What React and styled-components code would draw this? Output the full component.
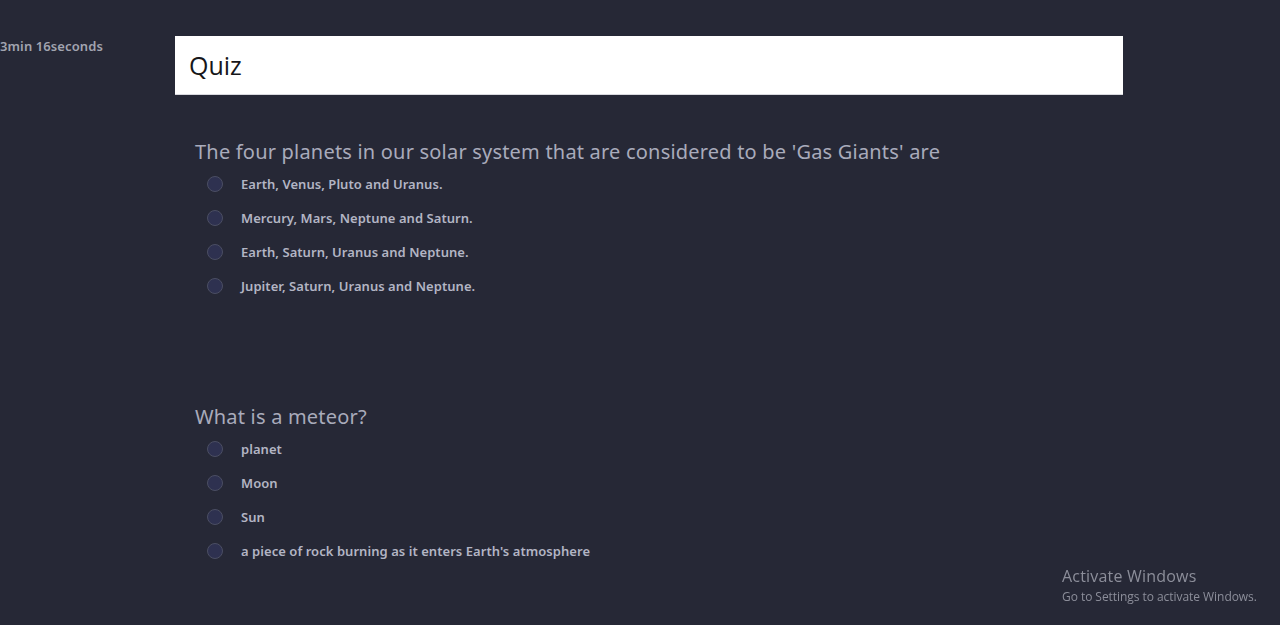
import React from 'react'
import styled, { createGlobalStyle } from 'styled-components'

const Global = createGlobalStyle`
  html, body {
    margin: 0;
    padding: 0;
    background: #262836;
  }
  body {
    font-family: "Noto Sans", Lato, sans-serif;
  }
`

const Page = styled.div`
  display: flex;
  background: #262836;
`

const Timer = styled.div`
  width: 175px;
  flex-shrink: 0;
  padding-top: 37px;
  font-size: 13px;
  font-weight: 600;
  color: #a2a4b0;
  letter-spacing: 0.1px;
`

const Main = styled.div`
  width: 948px;
  padding-top: 36px;
`

const Header = styled.div`
  height: 58px;
  background: #ffffff;
  border-bottom: 1px solid #d8d9de;
  display: flex;
  align-items: center;
  padding-left: 14px;
  font-family: "Open Sans", sans-serif;
  font-size: 25px;
  color: #16161a;
`

const List = styled.div`
  padding: 42px 0 0 20px;
`

const Block = styled.div`
  & + & {
    margin-top: 99px;
  }
`

const Title = styled.div`
  height: 30px;
  line-height: 30px;
  font-size: 20px;
  color: #a9abbb;
  letter-spacing: 0.2px;
`

const Option = styled.label`
  display: flex;
  align-items: center;
  height: 34px;
  padding-left: 12px;
  gap: 18px;
  font-size: 13px;
  font-weight: 600;
  color: #b3b5c4;
  letter-spacing: 0.05px;
  cursor: pointer;
`

const Radio = styled.span`
  width: 14px;
  height: 14px;
  border-radius: 50%;
  background: #2e3150;
  border: 1px solid #4b4e63;
  flex-shrink: 0;
`

const Watermark = styled.div`
  position: fixed;
  left: 1062px;
  top: 566px;
  font-family: "Open Sans", sans-serif;
  color: #8c8e9a;
`

const WmTitle = styled.div`
  font-size: 16px;
  line-height: 20px;
  letter-spacing: 0.2px;
`

const WmSub = styled.div`
  font-size: 12px;
  line-height: 21px;
  letter-spacing: -0.05px;
`

const questions = [
  {
    q: "The four planets in our solar system that are considered to be 'Gas Giants' are",
    options: [
      'Earth, Venus, Pluto and Uranus.',
      'Mercury, Mars, Neptune and Saturn.',
      'Earth, Saturn, Uranus and Neptune.',
      'Jupiter, Saturn, Uranus and Neptune.',
    ],
  },
  {
    q: 'What is a meteor?',
    options: ['planet', 'Moon', 'Sun', "a piece of rock burning as it enters Earth's atmosphere"],
  },
]

export default function App() {
  return (
    <>
      <Global />
      <Page>
        <Timer>3min 16seconds</Timer>
        <Main>
          <Header>Quiz</Header>
          <List>
            {questions.map((item, i) => (
              <Block key={i}>
                <Title>{item.q}</Title>
                {item.options.map((o) => (
                  <Option key={o}>
                    <Radio />
                    {o}
                  </Option>
                ))}
              </Block>
            ))}
          </List>
        </Main>
      </Page>
      <Watermark>
        <WmTitle>Activate Windows</WmTitle>
        <WmSub>Go to Settings to activate Windows.</WmSub>
      </Watermark>
    </>
  )
}
